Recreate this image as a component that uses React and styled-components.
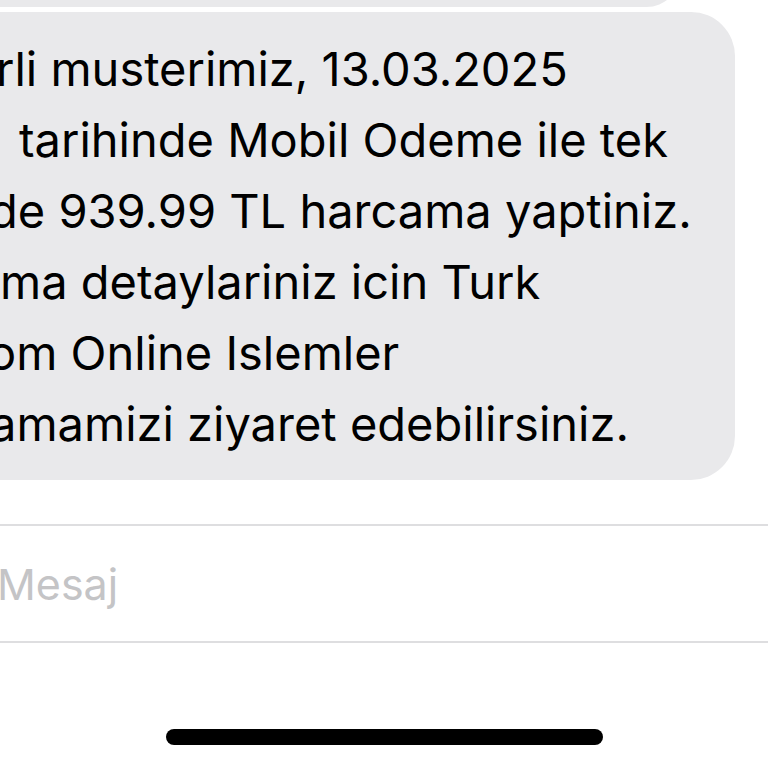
import React from "react";
import styled, { createGlobalStyle } from "styled-components";

const Global = createGlobalStyle`
  html, body {
    margin: 0;
    padding: 0;
    background: #ffffff;
    overflow: hidden;
  }
  body {
    width: 768px;
    height: 768px;
    font-family: Inter, "Noto Sans", "Liberation Sans", sans-serif;
  }
`;

const Screen = styled.div`
  width: 768px;
  height: 768px;
  overflow: hidden;
  display: flex;
  flex-direction: column;
  background: #ffffff;
`;

const PrevBubble = styled.div`
  margin-top: -60px;
  margin-left: -80px;
  width: 760px;
  height: 67px;
  flex: none;
  background: #e9e9eb;
  border-radius: 40px;
`;

const Bubble = styled.div`
  margin-top: 5px;
  margin-left: -80px;
  width: 815px;
  height: 468px;
  flex: none;
  box-sizing: border-box;
  padding: 21px 0 0 80px;
  background: #e9e9eb;
  border-radius: 44px;
  color: #000000;
  font-size: 47px;
  line-height: 71px;
  letter-spacing: 0;
  white-space: pre;
`;

const Line = styled.div`
  margin-left: ${(p) => p.$shift || 0}px;
`;

const InputField = styled.div`
  margin-top: 44px;
  margin-left: -60px;
  width: 900px;
  height: 119px;
  flex: none;
  box-sizing: border-box;
  border: 2px solid #dedee0;
  border-radius: 40px;
  display: flex;
  align-items: center;
  padding-left: 55px;
`;

const Placeholder = styled.span`
  font-size: 43px;
  color: #c4c4c6;
  letter-spacing: 0;
`;

const HomeBar = styled.div`
  margin: 86px auto 0;
  width: 437px;
  height: 16px;
  flex: none;
  border-radius: 8px;
  background: #000000;
`;

const lines = [
  { text: "rli musterimiz, 13.03.2025", shift: -4 },
  { text: "tarihinde Mobil Odeme ile tek", shift: 19 },
  { text: "de 939.99 TL harcama yaptiniz.", shift: -11 },
  { text: "ma detaylariniz icin Turk", shift: 0 },
  { text: "om Online Islemler", shift: -12 },
  { text: "amamizi ziyaret edebilirsiniz.", shift: -10 },
];

export default function App() {
  return (
    <>
      <Global />
      <Screen>
        <PrevBubble />
        <Bubble>
          {lines.map((l, i) => (
            <Line key={i} $shift={l.shift}>
              {l.text}
            </Line>
          ))}
        </Bubble>
        <InputField>
          <Placeholder>Mesaj</Placeholder>
        </InputField>
        <HomeBar />
      </Screen>
    </>
  );
}
